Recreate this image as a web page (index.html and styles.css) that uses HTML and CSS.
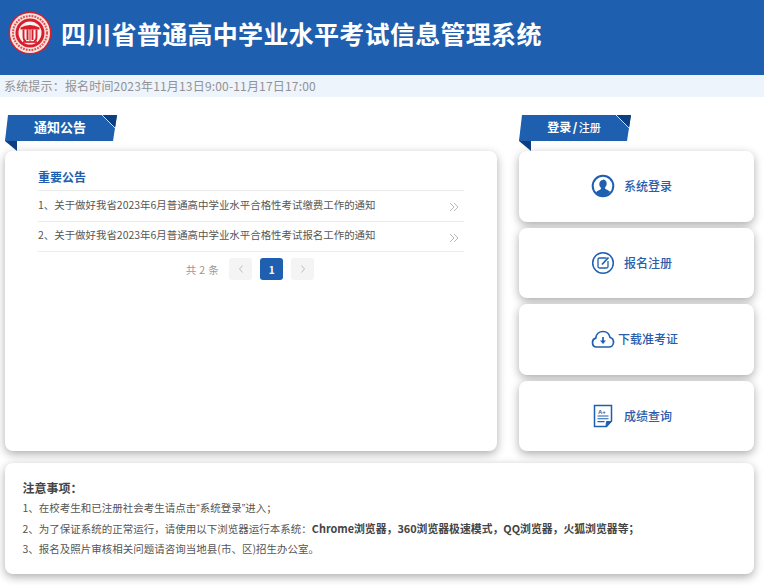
FILE: index.html
```html
<!DOCTYPE html>
<html lang="zh-CN">
<head>
<meta charset="utf-8">
<title>四川省普通高中学业水平考试信息管理系统</title>
<link rel="stylesheet" href="styles.css">
</head>
<body>
<header class="top">
  <svg class="logo" viewBox="0 0 44 44" aria-hidden="true">
    <circle cx="22" cy="22" r="21.5" fill="#d81e2c"/>
    <circle cx="22" cy="22" r="20" fill="#f8e2da"/>
    <circle cx="22" cy="22" r="17" fill="none" stroke="#d9505a" stroke-width="2" stroke-dasharray="1.8 1.1"/>
    <circle cx="22" cy="22" r="14.500" fill="#d81e2c"/>
    <circle cx="22" cy="22" r="11.500" fill="#fdf3ee"/>
    <path d="M12.500 16.500Q22 11.500 31.500 16.500V18.500H12.500Z" fill="#d81e2c"/>
    <path d="M15.5 18.5V25Q15.5 30 18 30M19.5 18.5V29M24.500 18.500V29M28.500 18.500V25Q28.500 30 26 30" fill="none" stroke="#d81e2c" stroke-width="1.900"/>
    <path d="M22 18v12" stroke="#d81e2c" stroke-width="1"/>
    <path d="M15 31h14" stroke="#d81e2c" stroke-width="1.700"/>
  </svg>
  <h1 class="site-title">四川省普通高中学业水平考试信息管理系统</h1>
</header>
<div class="tip">系统提示：报名时间2023年11月13日9:00-11月17日17:00</div>

<main class="main">
  <section class="col-left">
    <div class="ribbon">
      <svg class="ribbon-bg" viewBox="0 0 112 36" aria-hidden="true">
        <path d="M5 10 0 26l12 10V26Z" fill="#0d3f80"/>
        <path d="M3 0H112L108 26H0Z" fill="#1f5fb0"/>
        <path d="M97 0H112L110 13Z" fill="#0d3f80"/>
        <path d="M97 0 110 13" stroke="#cfe0f5" stroke-width="1"/>
      </svg>
      <span class="ribbon-text">通知公告</span>
    </div>
    <div class="card notice-card">
      <h2 class="notice-head">重要公告</h2>
      <ul class="notice-list">
        <li class="notice-item"><span>1、关于做好我省2023年6月普通高中学业水平合格性考试缴费工作的通知</span><svg class="more" viewBox="0 0 10 10"><path d="M1 1l4 4-4 4M5 1l4 4-4 4"/></svg></li>
        <li class="notice-item"><span>2、关于做好我省2023年6月普通高中学业水平合格性考试报名工作的通知</span><svg class="more" viewBox="0 0 10 10"><path d="M1 1l4 4-4 4M5 1l4 4-4 4"/></svg></li>
      </ul>
      <div class="pager">
        <span class="total">共 2 条</span>
        <span class="page-btn">
          <svg class="chev" viewBox="0 0 8 10"><path d="M5.500 1.500 2.500 5l3 3.500"/></svg>
        </span>
        <span class="page-btn active">1</span>
        <span class="page-btn">
          <svg class="chev" viewBox="0 0 8 10"><path d="M2.500 1.500 5.500 5l-3 3.500"/></svg>
        </span>
      </div>
    </div>
  </section>

  <aside class="col-right">
    <div class="ribbon">
      <svg class="ribbon-bg" viewBox="0 0 112 36" aria-hidden="true">
        <path d="M5 10 0 26l12 10V26Z" fill="#0d3f80"/>
        <path d="M3 0H112L108 26H0Z" fill="#1f5fb0"/>
        <path d="M97 0H112L110 13Z" fill="#0d3f80"/>
        <path d="M97 0 110 13" stroke="#cfe0f5" stroke-width="1"/>
      </svg>
      <span class="ribbon-text login-label">登录<b class="slash">/</b><small class="reg">注册</small></span>
    </div>
    <div class="actions">
      <a class="card action">
        <svg class="ico" viewBox="0 0 24 24">
          <circle cx="12" cy="12" r="10.300" fill="none" stroke="#1f5fb0" stroke-width="2"/>
          <path d="M12 5.500c2.300 0 3.700 1.800 3.700 4 0 1.600-.7 3-1.600 3.800v1.200c0 .8 3.800 1.500 5 3.400A10 10 0 0 1 12 22a10 10 0 0 1-7.100-3.600c1.200-1.900 5-2.600 5-3.400v-1.200c-.9-.8-1.600-2.200-1.600-3.800 0-2.200 1.400-4 3.700-4Z" fill="#1f5fb0"/>
        </svg>
        <span class="action-text">系统登录</span>
      </a>
      <a class="card action">
        <svg class="ico" viewBox="0 0 24 24" fill="none" stroke="#1f5fb0">
          <circle cx="12" cy="12" r="10.300" stroke-width="1.500"/>
          <path d="M15.500 7H8.500Q7 7 7 8.500v7Q7 17 8.500 17h7q1.500 0 1.500-1.500V10" stroke-width="1.300"/>
          <path d="M11 13.500 17.500 6.500" stroke-width="1.800"/>
        </svg>
        <span class="action-text">报名注册</span>
      </a>
      <a class="card action action-wide">
        <svg class="ico" viewBox="0 0 24 24" fill="none" stroke="#1f5fb0">
          <path d="M6 20H5.500C3 20 1.500 18 1.500 15.500 1.500 13.300 2.800 11.600 4.700 11.200 5.200 7.300 8 4.500 12 4.500c3.600 0 6.300 2.500 7.100 6 2 .4 3.400 2.400 3.400 4.700 0 2.700-2 4.800-4.500 4.800H6Z" stroke-width="1.700"/>
          <path d="M12 10v5.500" stroke-width="1.700"/>
          <path d="M9 13.500h6L12 17Z" fill="#1f5fb0" stroke="none"/>
        </svg>
        <span class="action-text">下载准考证</span>
      </a>
      <a class="card action">
        <svg class="ico" viewBox="0 0 24 24" fill="none" stroke="#1f5fb0">
          <path d="M3.500 1.500H20.500V17L15.500 22.500H3.500Z" stroke-width="1.500"/>
          <path d="M15 22.500 15.500 17.500H20.500Z" fill="#1f5fb0" stroke-width="1"/>
          <path d="M6.500 12h11M6.500 14.800h11M6.500 17.600h7" stroke-width="1.100"/>
          <text class="ico-text" x="7" y="9.500">A+</text>
        </svg>
        <span class="action-text">成绩查询</span>
      </a>
    </div>
  </aside>
</main>

<section class="card attention">
  <h3 class="att-head">注意事项：</h3>
  <p class="att-line">1、在校考生和已注册社会考生请点击<span class="q">“</span>系统登录<span class="q">”</span>进入；</p>
  <p class="att-line">2、为了保证系统的正常运行，请使用以下浏览器运行本系统：<b class="att-strong">Chrome浏览器，360浏览器极速模式，QQ浏览器，火狐浏览器等；</b></p>
  <p class="att-line">3、报名及照片审核相关问题请咨询当地县(市、区)招生办公室。</p>
</section>
</body>
</html>
```
FILE: styles.css
```css
* { box-sizing: border-box; }
html, body { margin: 0; padding: 0; }
body {
  width: 764px;
  height: 585px;
  overflow: hidden;
  background: #fff;
  font-family: "Noto Sans CJK SC", "Open Sans", sans-serif;
  color: #666;
}
.top {
  height: 75px;
  background: #1f5fb0;
  display: flex;
  align-items: center;
  padding: 0 0 9px 8px;
  gap: 9px;
}
.logo { width: 44px; height: 44px; flex: none; }
.site-title {
  margin: 0;
  font-size: 25px;
  line-height: 34px;
  letter-spacing: .3px;
  font-weight: 700;
  color: #fff;
  white-space: nowrap;
}
.tip {
  height: 22px;
  line-height: 21px;
  padding-left: 4px;
  font-size: 12px;
  background: #eef4fc;
  color: #929292;
  letter-spacing: .18px;
  white-space: nowrap;
}
.main {
  display: flex;
  gap: 22px;
  padding: 18px 10px 0 5px;
}
.col-left { width: 492px; flex: none; }
.col-right { width: 235px; flex: none; }
.ribbon {
  position: relative;
  width: 112px;
  height: 36px;
}
.ribbon-bg { display: block; width: 112px; height: 36px; }
.ribbon-text {
  position: absolute;
  top: 2px;
  left: 0;
  width: 110px;
  line-height: 20px;
  text-align: center;
  color: #fff;
  font-weight: 700;
  font-size: 13px;
}
.login-label { font-size: 12px; }
.slash { margin: 0 1.500px; }
.reg { font-size: 11px; font-weight: 500; }
.card {
  background: #fff;
  border-radius: 8px;
  box-shadow: 0 3px 10px rgba(0, 0, 0, .33);
}
.notice-card {
  height: 300px;
  padding: 15px 33px 0;
}
.notice-head {
  margin: 0;
  padding-bottom: 2px;
  font-size: 12px;
  line-height: 22px;
  font-weight: 700;
  color: #1f5fb0;
}
.notice-list {
  list-style: none;
  margin: 0;
  padding: 0;
  border-top: 1px solid #ececec;
}
.notice-item {
  height: 30.500px;
  display: flex;
  justify-content: space-between;
  align-items: center;
  border-bottom: 1px solid #ececec;
  font-size: 10.450px;
  color: #555;
  padding: 0 5px 3px 0;
  white-space: nowrap;
}
.more {
  width: 10px;
  height: 10px;
  flex: none;
  fill: none;
  stroke: #b0b0b0;
  stroke-width: .9;
  position: relative;
  top: 3px;
}
.pager {
  display: flex;
  justify-content: center;
  align-items: center;
  gap: 8px;
  margin-top: 6px;
  padding-right: 2px;
}
.total {
  font-size: 10.500px;
  color: #999;
  letter-spacing: .4px;
  margin-right: 2px;
}
.page-btn {
  width: 23px;
  height: 22px;
  border-radius: 3px;
  background: #f4f4f5;
  display: flex;
  align-items: center;
  justify-content: center;
  font-size: 10px;
  font-weight: 700;
  color: #fff;
}
.page-btn.active { background: #1f5fb0; }
.chev { width: 8px; height: 10px; fill: none; stroke: #bdbdbd; stroke-width: 1; }
.actions {
  display: flex;
  flex-direction: column;
  gap: 6px;
}
.action {
  height: 70.500px;
  display: flex;
  align-items: center;
  justify-content: center;
  gap: 9px;
  color: #2a5cab;
  font-size: 12px;
  font-weight: 500;
  text-decoration: none;
  padding-right: 10px;
}
.action-text { padding-bottom: 1px; }
.action-wide { gap: 3px; padding-right: 4px; }
.ico { width: 24px; height: 24px; flex: none; }
.ico-text { font: 700 6px "Liberation Sans", sans-serif; fill: #1f5fb0; stroke: none; }
.attention {
  margin: 12px 10px 0 5px;
  height: 111px;
  padding: 15px 17.500px 0;
  font-size: 10.500px;
  color: #555;
}
.att-head {
  margin: 0;
  font-size: 12px;
  line-height: 20px;
  font-weight: 700;
  color: #444;
}
.att-line {
  margin: 0;
  line-height: 20px;
  white-space: nowrap;
}
.q { font-family: "Liberation Sans", sans-serif; }
.att-strong { font-size: 10.850px; font-weight: 700; color: #444; }
```
